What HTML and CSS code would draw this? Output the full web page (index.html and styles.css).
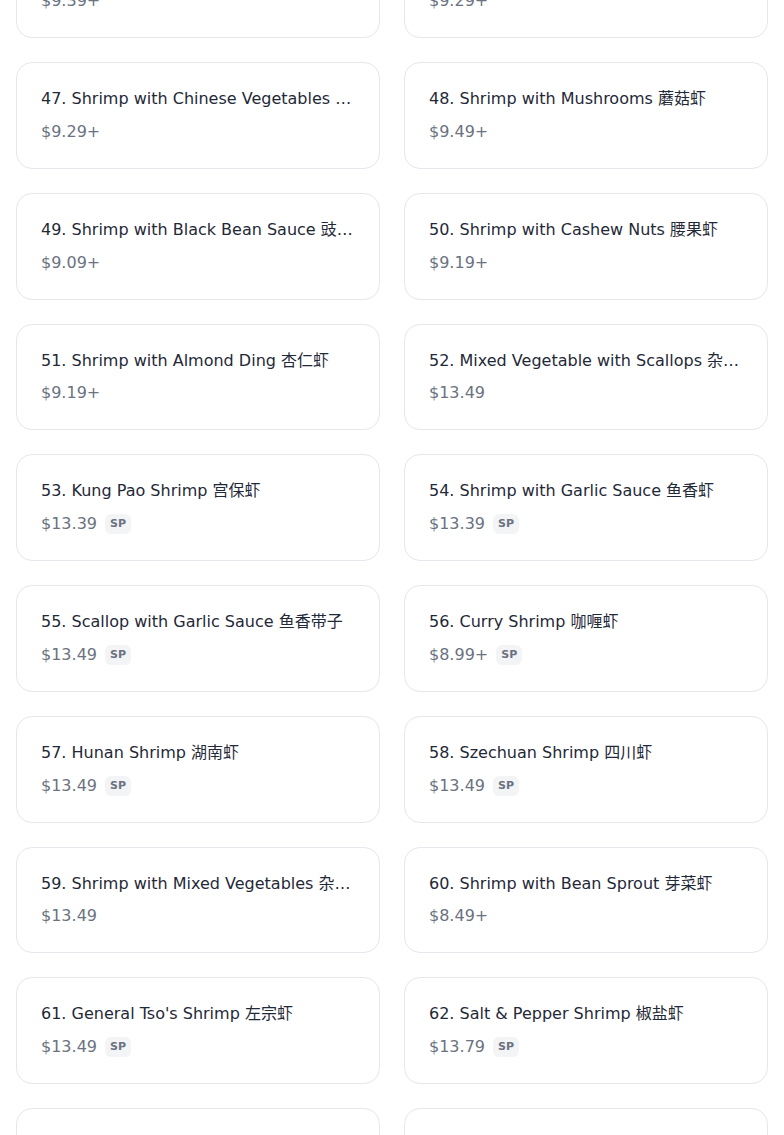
FILE: index.html
```html
<!DOCTYPE html>
<html lang="en">
<head>
    <meta charset="UTF-8">
    <meta name="viewport" content="width=device-width, initial-scale=1.0">
    <title>Shrimp &amp; Seafood</title>
    <link rel="stylesheet" href="styles.css">
</head>
<body>
    <div class="menu-grid">
        <div class="item-card">
            <div class="item-name">45. Shrimp with Lobster Sauce 虾龙糊</div>
            <div class="item-price"><span>$9.39+</span></div>
        </div>
        <div class="item-card">
            <div class="item-name">46. Shrimp with Broccoli 芥兰虾</div>
            <div class="item-price"><span>$9.29+</span></div>
        </div>
        <div class="item-card">
            <div class="item-name">47. Shrimp with Chinese Vegetables 中菜虾</div>
            <div class="item-price"><span>$9.29+</span></div>
        </div>
        <div class="item-card">
            <div class="item-name">48. Shrimp with Mushrooms 蘑菇虾</div>
            <div class="item-price"><span>$9.49+</span></div>
        </div>
        <div class="item-card">
            <div class="item-name">49. Shrimp with Black Bean Sauce 豉汁虾</div>
            <div class="item-price"><span>$9.09+</span></div>
        </div>
        <div class="item-card">
            <div class="item-name">50. Shrimp with Cashew Nuts 腰果虾</div>
            <div class="item-price"><span>$9.19+</span></div>
        </div>
        <div class="item-card">
            <div class="item-name">51. Shrimp with Almond Ding 杏仁虾</div>
            <div class="item-price"><span>$9.19+</span></div>
        </div>
        <div class="item-card">
            <div class="item-name">52. Mixed Vegetable with Scallops 杂菜带子</div>
            <div class="item-price"><span>$13.49</span></div>
        </div>
        <div class="item-card">
            <div class="item-name">53. Kung Pao Shrimp 宫保虾</div>
            <div class="item-price"><span>$13.39</span><span class="badge">SP</span></div>
        </div>
        <div class="item-card">
            <div class="item-name">54. Shrimp with Garlic Sauce 鱼香虾</div>
            <div class="item-price"><span>$13.39</span><span class="badge">SP</span></div>
        </div>
        <div class="item-card">
            <div class="item-name">55. Scallop with Garlic Sauce 鱼香带子</div>
            <div class="item-price"><span>$13.49</span><span class="badge">SP</span></div>
        </div>
        <div class="item-card">
            <div class="item-name">56. Curry Shrimp 咖喱虾</div>
            <div class="item-price"><span>$8.99+</span><span class="badge">SP</span></div>
        </div>
        <div class="item-card">
            <div class="item-name">57. Hunan Shrimp 湖南虾</div>
            <div class="item-price"><span>$13.49</span><span class="badge">SP</span></div>
        </div>
        <div class="item-card">
            <div class="item-name">58. Szechuan Shrimp 四川虾</div>
            <div class="item-price"><span>$13.49</span><span class="badge">SP</span></div>
        </div>
        <div class="item-card">
            <div class="item-name">59. Shrimp with Mixed Vegetables 杂菜虾</div>
            <div class="item-price"><span>$13.49</span></div>
        </div>
        <div class="item-card">
            <div class="item-name">60. Shrimp with Bean Sprout 芽菜虾</div>
            <div class="item-price"><span>$8.49+</span></div>
        </div>
        <div class="item-card">
            <div class="item-name">61. General Tso's Shrimp 左宗虾</div>
            <div class="item-price"><span>$13.49</span><span class="badge">SP</span></div>
        </div>
        <div class="item-card">
            <div class="item-name">62. Salt &amp; Pepper Shrimp 椒盐虾</div>
            <div class="item-price"><span>$13.79</span><span class="badge">SP</span></div>
        </div>
        <div class="item-card">
            <div class="item-name">63. Sesame Shrimp 芝麻虾</div>
            <div class="item-price"><span>$13.79</span><span class="badge">SP</span></div>
        </div>
        <div class="item-card">
            <div class="item-name">64. Orange Shrimp 陈皮虾</div>
            <div class="item-price"><span>$13.79</span><span class="badge">SP</span></div>
        </div>
    </div>
</body>
</html>
```

FILE: styles.css
```css
body {
    margin: 0;
    font-family: "DejaVu Sans", "Noto Sans CJK SC", sans-serif;
    background: #fff;
    color: #1f2937;
}
.menu-grid {
    display: grid;
    grid-template-columns: 1fr 1fr;
    gap: 24px;
    padding: 0 16px;
    margin-top: -68.75px; /* page is scrolled into the shrimp section */
}
.item-card {
    border: 1px solid #e5e7eb;
    border-radius: 16px;
    padding: 24px;
    min-width: 0;
}
.item-name {
    font-size: 16px;
    line-height: 24px;
    white-space: nowrap;
    overflow: hidden;
    text-overflow: ellipsis;
}
.item-price {
    display: flex;
    align-items: center;
    gap: 8px;
    margin-top: 8.75px;
    font-size: 16px;
    line-height: 24px;
    color: #6b7280;
}
.badge {
    font-size: 11px;
    line-height: 16px;
    font-weight: bold;
    padding: 2px 5px;
    border-radius: 6px;
    background: #f3f4f6;
    color: #6b7280;
}
```
